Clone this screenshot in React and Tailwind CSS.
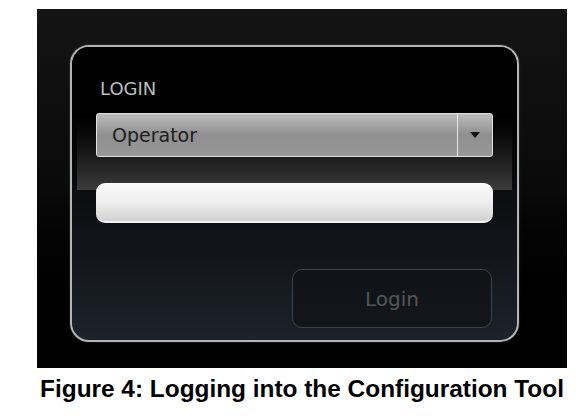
import { useState } from "react";

// Login panel from the configuration tool, with the figure caption under it
const ROLES = ["Operator", "Administrator", "Service"];

const LoginPanel = () => {
  const [role] = useState(ROLES[0]);
  const [password, setPassword] = useState("");

  return (
    <div className="w-[449px] h-[297px] rounded-[19px] border-2 border-[#b4b4b4] overflow-hidden bg-gradient-to-b from-black via-[#0b0d10] to-[#1d232b] shadow-[0_0_2px_rgba(255,255,255,0.25)]">
      {/* Top band behind the role selector */}
      <div className="mx-[5px] h-[143px] pt-[33px] bg-gradient-to-b from-black from-[35%] to-[#3b3b3b]">
        <div className="ml-[23px] text-[18px] leading-[18px] text-[#bdbdbd] font-['DejaVu_Sans',sans-serif]">
          LOGIN
        </div>
        <div className="ml-[19px] mt-[15px] w-[397px] h-[44px] flex rounded-[3px] border border-[#e2e2e2] bg-gradient-to-b from-[#bdbdbd] via-[#8f8f8f] to-[#989898]">
          <div className="flex-1 flex items-center pl-[15px] text-[19px] leading-[19px] text-[#1c1c1c] font-['DejaVu_Sans',sans-serif]">
            {role}
          </div>
          <div className="w-[35px] flex items-center justify-center border-l border-[#e6e6e6]">
            <svg width="10" height="6" viewBox="0 0 10 6">
              <path d="M0 0 L10 0 L5 6 Z" fill="#111" />
            </svg>
          </div>
        </div>
      </div>

      {/* Password field */}
      <input
        type="password"
        value={password}
        onChange={(e) => setPassword(e.target.value)}
        className="block -mt-[7px] ml-[24px] w-[397px] h-[40px] rounded-[9px] border-b-2 border-[#f2f2f2] bg-gradient-to-b from-[#fbfbfb] via-[#eeeeee] to-[#d2d2d2] outline-none px-3"
      />

      {/* Login button */}
      <button
        type="button"
        className="block mt-[46px] ml-[220px] w-[200px] h-[59px] rounded-[10px] border border-[#3d434b] bg-[#0d1014]/60 text-[20px] leading-[20px] text-[#555555] font-['DejaVu_Sans',sans-serif]"
      >
        Login
      </button>
    </div>
  );
};

export default function App() {
  return (
    <div className="w-[587px] h-[419px] bg-white pt-[9px]">
      <div className="ml-[37px] w-[530px] h-[359px] pt-[36px] pl-[33px] bg-gradient-to-b from-[#141414] via-[#0a0a0a] to-black">
        <LoginPanel />
      </div>
      <div className="ml-[37px] w-[530px] mt-[9px] text-center text-[24.4px] leading-[24px] font-bold text-black font-['Liberation_Sans',Arial,sans-serif]">
        Figure 4: Logging into the Configuration Tool
      </div>
    </div>
  );
}
